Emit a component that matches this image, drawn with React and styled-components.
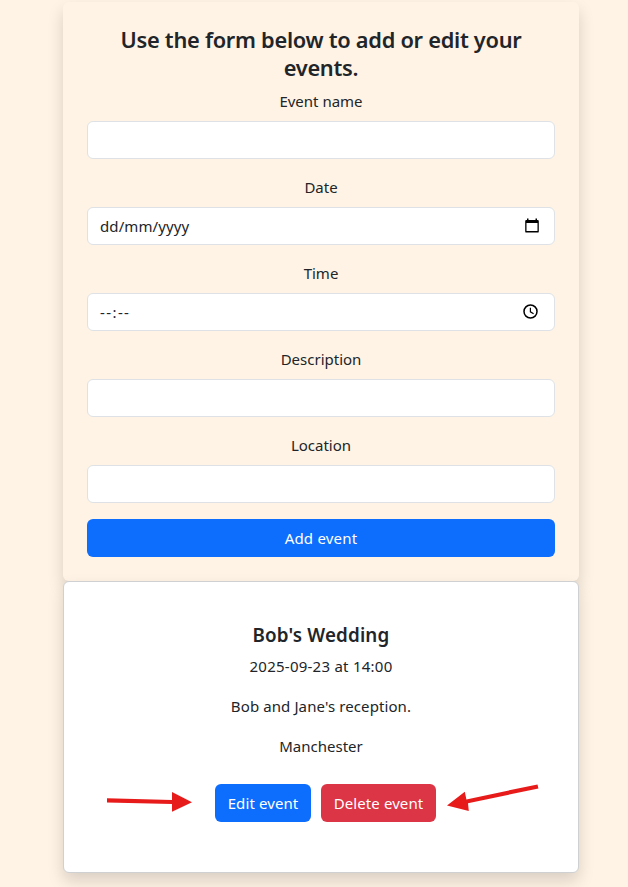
import React from "react";
import styled, { createGlobalStyle, css } from "styled-components";

const GlobalStyle = createGlobalStyle`
  *, *::before, *::after { box-sizing: border-box; }
  body {
    margin: 0;
    background: #fff3e5;
    color: #212529;
    font-family: "Noto Sans", "Open Sans", sans-serif;
    font-size: 15px;
    line-height: 24px;
  }
`;

const Page = styled.main`
  height: 887px;
  overflow: hidden;
  padding: 2px 49px 0 63px;
`;

const cardShadow = css`
  border-radius: 6px;
  box-shadow: 0 8px 16px rgba(0, 0, 0, 0.15);
`;

const FormCard = styled.form`
  ${cardShadow}
  display: flex;
  flex-direction: column;
  height: 579px;
  padding: 24px;
  background: #fff3e5;
`;

const FormTitle = styled.h1`
  margin: 0 0 8px;
  height: 55px;
  font-size: 21.8px;
  font-weight: 600;
  line-height: 28px;
  letter-spacing: -0.28px;
  text-align: center;
`;

const Field = styled.label`
  display: flex;
  flex-direction: column;
  gap: 8px;
  margin-bottom: 16px;
  text-align: center;
`;

const Control = styled.span`
  display: flex;
  align-items: center;
  justify-content: space-between;
  height: 38px;
  padding: 0 ${(p) => p.$inset || "15px"} 0 12px;
  border: 1px solid #dee2e6;
  border-radius: 6px;
  background: #fff;
  letter-spacing: ${(p) => p.$track || "0.1px"};
`;

const Button = styled.button`
  height: 38px;
  padding: 0;
  width: ${(p) => p.$width || "100%"};
  border: 0;
  border-radius: 6px;
  background: ${(p) => (p.$danger ? "#dc3545" : "#0d6efd")};
  color: #fff;
  font: inherit;
  letter-spacing: ${(p) => p.$track || "0.1px"};
`;

const EventCard = styled.article`
  ${cardShadow}
  position: relative;
  height: 292px;
  padding-top: 41px;
  border: 1px solid #ced0d2;
  background: #fff;
  text-align: center;
`;

const EventTitle = styled.h2`
  margin: 0 0 7px;
  font-size: 18.8px;
  font-weight: 600;
  line-height: 24px;
  letter-spacing: 0.15px;
`;

const Line = styled.p`
  margin: 0 0 16px;
  letter-spacing: ${(p) => p.$track || "0"};
`;

const Actions = styled.div`
  display: flex;
  gap: 10px;
  margin: 26px 0 0 151px;
`;

const Arrows = styled.svg`
  position: absolute;
  left: 36px;
  top: 194px;
  pointer-events: none;
`;

const CalendarIcon = () => (
  <svg width="14" height="16" viewBox="0 0 14 16">
    <path fillRule="evenodd" fill="#000" d="M2 .5h1.5v1.4h7V.5H12v1.4h.6q1.2 0 1.2 1.2v10.3q0 1.2-1.2 1.2H1.4Q.2 14.6.2 13.4V3.1q0-1.2 1.2-1.2H2zM1.5 5v8.1h11V5z" />
  </svg>
);

const ClockIcon = () => (
  <svg width="15" height="17" viewBox="0 0 15 17" fill="none" stroke="#000">
    <circle cx="7.5" cy="7.5" r="6.5" strokeWidth="1.5" />
    <path d="M7.4 3.7v4.1l3.2 2" strokeWidth="1.2" />
  </svg>
);

export default function App() {
  return (
    <>
      <GlobalStyle />
      <Page>
        <FormCard>
          <FormTitle>Use the form below to add or edit your<br />events.</FormTitle>
          <Field>Event name<Control /></Field>
          <Field>Date<Control>dd/mm/yyyy<CalendarIcon /></Control></Field>
          <Field>Time<Control $inset="16px" $track="1.4px">--:--<ClockIcon /></Control></Field>
          <Field>Description<Control /></Field>
          <Field>Location<Control /></Field>
          <Button type="button" $track="0.2px">Add event</Button>
        </FormCard>
        <EventCard>
          <EventTitle>Bob's Wedding</EventTitle>
          <Line $track="0.25px">2025-09-23 at 14:00</Line>
          <Line $track="0.1px">Bob and Jane's reception.</Line>
          <Line>Manchester</Line>
          <Actions>
            <Button $width="96px">Edit event</Button>
            <Button $width="115px" $danger>Delete event</Button>
          </Actions>
          <Arrows width="450" height="50" viewBox="100 776 450 50" fill="#e81b1b">
            <path d="M107 798.2 172 799.9V792l20 10.3-20 9.5v-7.7L107 802.4z" />
            <path d="M537.5 784.4 538.4 788.4 468 803.3 468.8 811 447 805.5 464.8 791.7 466.4 799.4z" />
          </Arrows>
        </EventCard>
      </Page>
    </>
  );
}
